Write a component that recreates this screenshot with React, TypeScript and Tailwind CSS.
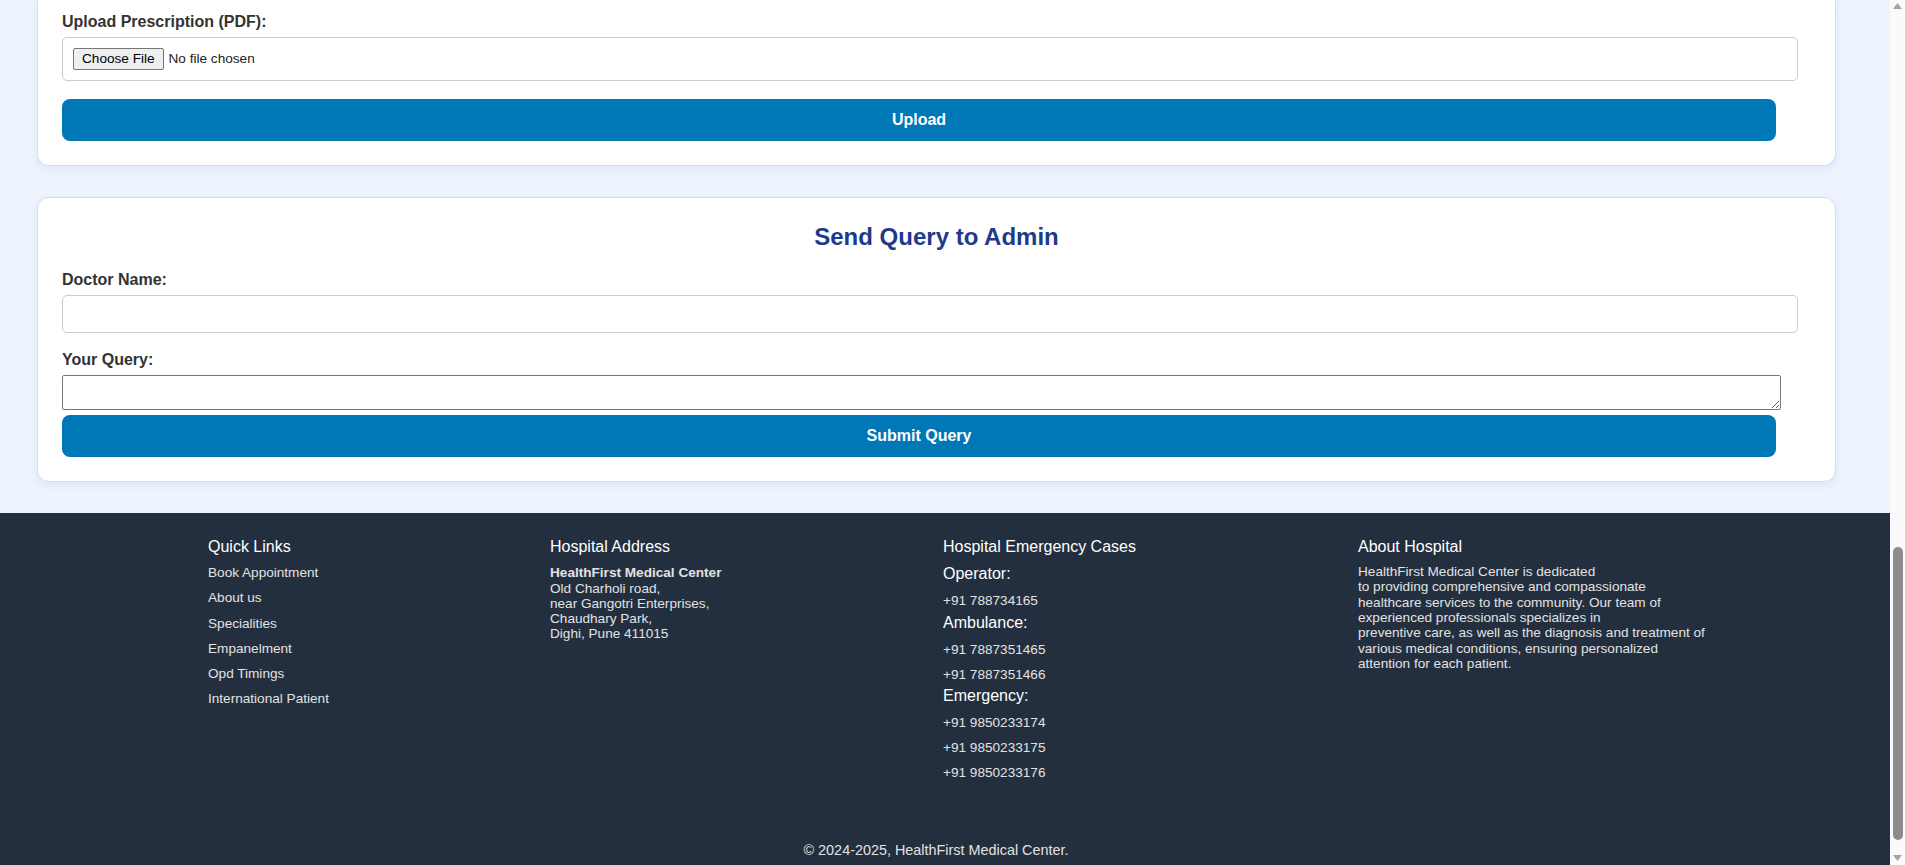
import React from "react";

const quickLinks = [
  "Book Appointment",
  "About us",
  "Specialities",
  "Empanelment",
  "Opd Timings",
  "International Patient",
];

export default function App() {
  return (
    <div className="flex h-[865px] w-full overflow-hidden font-['Liberation_Sans',Arial,sans-serif]">
      <div className="flex min-w-0 flex-1 flex-col bg-[#eef4fe]">
        {/* Card 1 (scrolled, top cut off) */}
        <div className="pl-[37px]">
          <div className="w-[1799px] rounded-b-[12px] border border-t-0 border-[#d3def2] bg-white pb-[24px] pl-[24px] pt-[12.5px] shadow-[0_3px_8px_rgba(59,110,200,0.10)]">
            <label className="block text-[16px] font-bold leading-[18.4px] text-[#333]">
              Upload Prescription (PDF):
            </label>
            <input
              type="file"
              accept="application/pdf"
              className="mt-[6.4px] block h-[43.4px] w-[1736px] rounded-[5px] border border-[#cccccc] bg-white px-[10px] py-[10px] text-[13.6px] leading-[15.6px] text-[#222] file:mr-[5px] file:rounded-[2px] file:border file:border-solid file:border-[#767676] file:bg-[#efefef] file:px-[8px] file:py-[2px] file:text-[13.6px] file:text-black"
            />
            <button className="mt-[18.3px] flex h-[41.7px] w-[1714px] items-center justify-center rounded-[8px] bg-[#0077b6] text-[16px] font-bold text-white">
              Upload
            </button>
          </div>
        </div>

        {/* Card 2 */}
        <div className="mt-[31.6px] pl-[37px]">
          <div className="w-[1799px] rounded-[12px] border border-[#d3def2] bg-white pb-[24px] pl-[24px] pt-[25px] shadow-[0_3px_8px_rgba(59,110,200,0.10)]">
            <h2 className="pr-[24px] text-center text-[24px] font-bold leading-[27.6px] text-[#1e3a8a]">
              Send Query to Admin
            </h2>
            <label className="mt-[20px] block text-[16px] font-bold leading-[18.4px] text-[#333]">
              Doctor Name:
            </label>
            <input
              type="text"
              className="mt-[5.6px] block h-[37.7px] w-[1736px] rounded-[5px] border border-[#cccccc] bg-white px-[10px] text-[13.6px] outline-none"
            />
            <label className="mt-[18.8px] block text-[16px] font-bold leading-[18.4px] text-[#333]">
              Your Query:
            </label>
            <textarea className="mt-[5.1px] block h-[35.3px] w-[1719px] resize rounded-[2px] border border-[#767676] bg-white px-[2px] text-[13.6px] outline-none" />
            <button className="mt-[4.7px] flex h-[41.7px] w-[1714px] items-center justify-center rounded-[8px] bg-[#0077b6] text-[16px] font-bold text-white">
              Submit Query
            </button>
          </div>
        </div>

        {/* Footer */}
        <footer className="mt-[31px] flex-1 bg-[#232f3e] pt-[25.8px] text-[13.6px] text-[#e2e2e2]">
          <div className="grid grid-cols-[342px_393px_415px_auto] pl-[208px]">
            <div>
              <h3 className="text-[16px] leading-[18.4px] text-white">Quick Links</h3>
              <ul className="mt-[8.6px] flex flex-col gap-[9.5px] leading-[15.6px]">
                {quickLinks.map((l) => (
                  <li key={l}>{l}</li>
                ))}
              </ul>
            </div>
            <div>
              <h3 className="text-[16px] leading-[18.4px] text-white">Hospital Address</h3>
              <p className="mt-[8.6px] leading-[15.2px]">
                <strong className="font-bold">HealthFirst Medical Center</strong>
                <br />
                Old Charholi road,
                <br />
                near Gangotri Enterprises,
                <br />
                Chaudhary Park,
                <br />
                Dighi, Pune 411015
              </p>
            </div>
            <div className="flex flex-col">
              <h3 className="text-[16px] leading-[18.4px] text-white">Hospital Emergency Cases</h3>
              <div className="mt-[8.4px] text-[16px] leading-[18.4px] text-white">Operator:</div>
              <div className="mt-[9.5px] leading-[15.6px]">+91 788734165</div>
              <div className="mt-[5px] text-[16px] leading-[18.4px] text-white">Ambulance:</div>
              <div className="mt-[10px] leading-[15.6px]">+91 7887351465</div>
              <div className="mt-[9.4px] leading-[15.6px]">+91 7887351466</div>
              <div className="mt-[4.5px] text-[16px] leading-[18.4px] text-white">Emergency:</div>
              <div className="mt-[9.7px] leading-[15.6px]">+91 9850233174</div>
              <div className="mt-[9.7px] leading-[15.6px]">+91 9850233175</div>
              <div className="mt-[9px] leading-[15.6px]">+91 9850233176</div>
            </div>
            <div>
              <h3 className="text-[16px] leading-[18.4px] text-white">About Hospital</h3>
              <p className="mt-[7.4px] leading-[15.35px]">
                HealthFirst Medical Center is dedicated
                <br />
                to providing comprehensive and compassionate
                <br />
                healthcare services to the community. Our team of
                <br />
                experienced professionals specializes in
                <br />
                preventive care, as well as the diagnosis and treatment of
                <br />
                various medical conditions, ensuring personalized
                <br />
                attention for each patient.
              </p>
            </div>
          </div>
          <p className="mt-[61px] pr-[18px] text-center text-[14.4px] leading-[16.6px] text-[#e2e2e2]">
            © 2024-2025, HealthFirst Medical Center.
          </p>
        </footer>
      </div>

      {/* Scrollbar */}
      <div className="flex w-[15px] flex-col items-center bg-[#fafafa]">
        <svg width="9" height="6" viewBox="0 0 9 6" className="mt-[3px]">
          <polygon points="4.5,0 9,6 0,6" fill="#a3a3a3" />
        </svg>
        <div className="flex w-full flex-1 flex-col items-center justify-end">
          <div className="mb-[15px] h-[293px] w-[10px] rounded-full bg-[#8c8c8c]" />
        </div>
        <svg width="9" height="6" viewBox="0 0 9 6" className="mb-[4px]">
          <polygon points="0,0 9,0 4.5,6" fill="#a3a3a3" />
        </svg>
      </div>
    </div>
  );
}
